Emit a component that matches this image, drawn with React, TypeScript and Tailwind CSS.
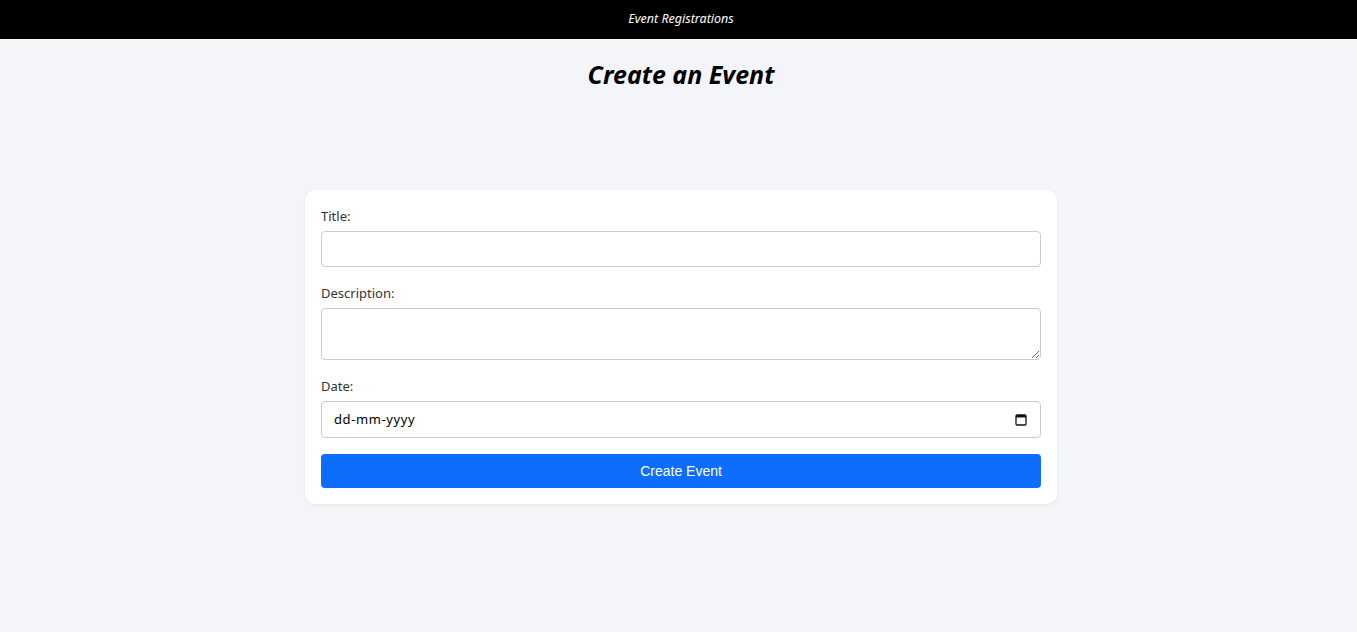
import React from 'react';

function CalendarIcon() {
  return (
    <svg width="12" height="12" viewBox="0 0 12 12" className="shrink-0">
      <rect x="1" y="1" width="10" height="10" rx="1" fill="none" stroke="#111" strokeWidth="1.3" />
      <rect x="1" y="1" width="10" height="2.5" fill="#111" />
    </svg>
  );
}

export default function App() {
  return (
    <div className="min-h-screen bg-[#f4f5f9] pl-[5px] font-['Noto_Sans',sans-serif]">
      <header className="h-[39px] bg-black flex items-center justify-center -ml-[5px] pl-[5px]">
        <span className="text-white italic text-[12.5px]">Event Registrations</span>
      </header>

      <h1 className="text-center italic font-bold text-[25px] text-black mt-[13px] leading-[44px]">
        Create an Event
      </h1>

      <div className="flex justify-center pt-[94px]">
        <form
          className="w-[752px] bg-white rounded-[10px] shadow-[0_1px_4px_rgba(0,0,0,0.06)] p-4 flex flex-col"
          onSubmit={(e) => e.preventDefault()}
        >
          <label className="text-[13px] text-[#333] leading-5 mb-[5px]">Title:</label>
          <input
            type="text"
            className="h-[36px] border border-[#ccc] rounded-[4px] px-3 text-sm outline-none"
          />

          <label className="text-[13px] text-[#333] leading-5 mt-4 mb-[5px]">Description:</label>
          <textarea className="h-[52px] border border-[#ccc] rounded-[4px] px-3 py-2 text-sm outline-none" />

          <label className="text-[13px] text-[#333] leading-5 mt-4 mb-[5px]">Date:</label>
          <div className="h-[37px] border border-[#ccc] rounded-[4px] pl-3 pr-[13px] flex items-center">
            <input
              type="text"
              placeholder="dd-mm-yyyy"
              className="flex-1 min-w-0 text-[13px] text-black placeholder:text-black outline-none tracking-[0.6px]"
            />
            <CalendarIcon />
          </div>

          <button
            type="submit"
            className="mt-4 h-[34px] bg-[#0d6efd] rounded-[4px] text-white text-sm font-['Liberation_Sans',Arial,sans-serif]"
          >
            Create Event
          </button>
        </form>
      </div>
    </div>
  );
}
